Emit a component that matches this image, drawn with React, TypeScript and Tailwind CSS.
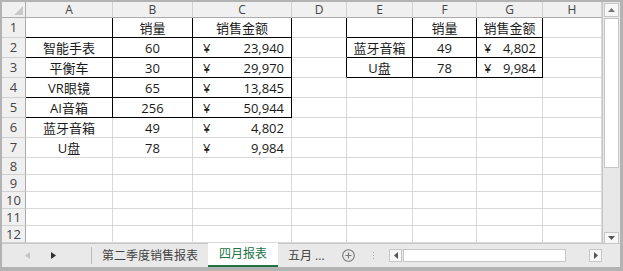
import React from 'react'

const cols = ['A', 'B', 'C', 'D', 'E', 'F', 'G', 'H']

type Cell = { t?: string; align?: 'c' | 'yen' | 'yen2' }

const rows: Record<number, Record<string, Cell>> = {
  1: { B: { t: '销量' }, C: { t: '销售金额' }, F: { t: '销量' }, G: { t: '销售金额' } },
  2: { A: { t: '智能手表' }, B: { t: '60' }, C: { t: '23,940', align: 'yen' }, E: { t: '蓝牙音箱' }, F: { t: '49' }, G: { t: '4,802', align: 'yen2' } },
  3: { A: { t: '平衡车' }, B: { t: '30' }, C: { t: '29,970', align: 'yen' }, E: { t: 'U盘' }, F: { t: '78' }, G: { t: '9,984', align: 'yen2' } },
  4: { A: { t: 'VR眼镜' }, B: { t: '65' }, C: { t: '13,845', align: 'yen' } },
  5: { A: { t: 'AI音箱' }, B: { t: '256' }, C: { t: '50,944', align: 'yen' } },
  6: { A: { t: '蓝牙音箱' }, B: { t: '49' }, C: { t: '4,802', align: 'yen' } },
  7: { A: { t: 'U盘' }, B: { t: '78' }, C: { t: '9,984', align: 'yen' } },
}

// which cells carry a thin black border on the right / bottom
function blackRight(r: number, c: string) {
  if (r >= 1 && r <= 5 && ['A', 'B', 'C'].includes(c)) return true
  if (r >= 1 && r <= 3 && ['D', 'E', 'F', 'G'].includes(c)) return true
  return false
}
function blackBottom(r: number, c: string) {
  if (r >= 1 && r <= 5 && ['A', 'B', 'C'].includes(c)) return true
  if (r >= 1 && r <= 3 && ['E', 'F', 'G'].includes(c)) return true
  return false
}

function CellView({ r, c }: { r: number; c: string }) {
  const cell = rows[r]?.[c]
  const cls = [
    'border-r border-b flex items-center text-[13px] text-[#1a1a1a] leading-[16px] overflow-hidden whitespace-nowrap',
    blackRight(r, c) ? 'border-r-black' : 'border-r-[#d9d9d9]',
    blackBottom(r, c) ? 'border-b-black' : 'border-b-[#d9d9d9]',
  ].join(' ')
  if (!cell) return <div className={cls} />
  if (cell.align === 'yen') {
    return (
      <div className={cls + ' justify-between pl-[10px] pr-[7px]'}>
        <span>¥</span>
        <span>{cell.t}</span>
      </div>
    )
  }
  if (cell.align === 'yen2') {
    return (
      <div className={cls + ' justify-between pl-[7px] pr-[6px]'}>
        <span>¥</span>
        <span>{cell.t}</span>
      </div>
    )
  }
  return <div className={cls + ' justify-center'}>{cell.t}</div>
}

export default function App() {
  const rowNums = Array.from({ length: 12 }, (_, i) => i + 1)

  return (
    <div
      className="w-[623px] h-[271px] bg-[#b3b3b3] pt-[2px] pl-[2px] pr-[3px] pb-[4px] flex flex-col"
      style={{ fontFamily: '"Open Sans", "Noto Sans CJK SC", sans-serif' }}
    >
      <div className="flex h-[241px]">
        {/* Sheet grid */}
        <div className="grid grid-cols-[24px_87px_80px_99px_55px_66px_64px_66px_59px] grid-rows-[16px_repeat(7,20px)_repeat(5,17px)] bg-white w-[600px] overflow-hidden">
          {/* corner */}
          <div className="bg-[#f0f0f0] border-r border-b border-[#ababab] flex items-end justify-end pr-[2px] pb-[2px]">
            <svg width="9" height="9" viewBox="0 0 9 9">
              <polygon points="9,0 9,9 0,9" fill="#c9c9c9" />
            </svg>
          </div>
          {cols.map((c) => (
            <div
              key={c}
              className="bg-[#f0f0f0] border-r border-r-[#d0d0d0] border-b border-b-[#ababab] flex items-center justify-center text-[12px] text-[#444] leading-[14px]"
            >
              {c}
            </div>
          ))}
          {rowNums.map((r) => (
            <React.Fragment key={r}>
              <div className="bg-[#f0f0f0] border-r border-r-[#ababab] border-b border-b-[#d0d0d0] flex items-center justify-center text-[13px] text-[#444] leading-[15px]">
                {r}
              </div>
              {cols.map((c) => (
                <CellView key={c} r={r} c={c} />
              ))}
            </React.Fragment>
          ))}
        </div>

        {/* Vertical scrollbar */}
        <div className="w-[18px] bg-[#e8e8e8] border-l border-[#c6c6c6] flex flex-col items-center pt-[1px] pb-[1px]">
          <div className="w-[15px] h-[14px] bg-[#f7f7f7] border border-[#c6c6c6] flex items-center justify-center">
            <svg width="7" height="4" viewBox="0 0 7 4">
              <polygon points="3.5,0 7,4 0,4" fill="#777" />
            </svg>
          </div>
          <div className="w-[15px] h-[150px] bg-white border border-[#c6c6c6] mt-[1px]" />
          <div className="flex-1" />
          <div className="w-[15px] h-[12px] bg-[#f7f7f7] border border-[#c6c6c6] flex items-center justify-center mb-[-2px]">
            <svg width="7" height="4" viewBox="0 0 7 4">
              <polygon points="0,0 7,0 3.5,4" fill="#555" />
            </svg>
          </div>
        </div>
      </div>

      {/* Sheet tabs bar */}
      <div className="flex h-[24px] bg-[#e9e9e9] border-t border-[#c6c6c6]">
        <div className="flex w-[600px] items-stretch">
          <div className="w-[89px] flex items-center pl-[23px] gap-[21px]">
            <svg width="5" height="7" viewBox="0 0 5 7">
              <polygon points="5,0 5,7 0,3.5" fill="#c4c4c4" />
            </svg>
            <svg width="5" height="7" viewBox="0 0 5 7">
              <polygon points="0,0 5,3.5 0,7" fill="#2f2f2f" />
            </svg>
          </div>
          <div className="w-px my-[3px] bg-[#bdbdbd]" />
          <div className="w-[116px] flex items-center justify-center text-[12px] text-[#444]">
            第二季度销售报表
          </div>
          <div className="w-[70px] bg-white border-b-2 border-[#217346] flex items-center justify-center text-[12px] text-[#217346] -mt-px">
            四月报表
          </div>
          <div className="w-[58px] flex items-center pl-[10px] text-[12px] text-[#444]">五月 ...</div>
          <div className="w-[24px] flex items-center justify-center">
            <svg width="13" height="13" viewBox="0 0 13 13">
              <circle cx="6.5" cy="6.5" r="5.8" fill="none" stroke="#777" strokeWidth="1.1" />
              <path d="M6.5 3.5v6M3.5 6.5h6" stroke="#777" strokeWidth="1.1" />
            </svg>
          </div>
          <div className="w-[26px] flex flex-col items-center justify-center gap-[2px]">
            <div className="w-[1px] h-[1px] bg-[#aaa]" />
            <div className="w-[1px] h-[1px] bg-[#aaa]" />
            <div className="w-[1px] h-[1px] bg-[#aaa]" />
          </div>
          {/* horizontal scrollbar */}
          <div className="flex-1 flex items-center pl-[3px]">
            <div className="w-[13px] h-[13px] bg-[#f7f7f7] border border-[#c6c6c6] flex items-center justify-center">
              <svg width="4" height="7" viewBox="0 0 4 7">
                <polygon points="4,0 4,7 0,3.5" fill="#555" />
              </svg>
            </div>
            <div className="w-[163px] h-[13px] bg-white border border-[#c6c6c6] ml-[1px]" />
            <div className="flex-1" />
            <div className="w-[13px] h-[13px] bg-[#f7f7f7] border border-[#c6c6c6] flex items-center justify-center">
              <svg width="4" height="7" viewBox="0 0 4 7">
                <polygon points="0,0 4,3.5 0,7" fill="#555" />
              </svg>
            </div>
          </div>
        </div>
        <div className="w-[18px] bg-[#e9e9e9]" />
      </div>
    </div>
  )
}
